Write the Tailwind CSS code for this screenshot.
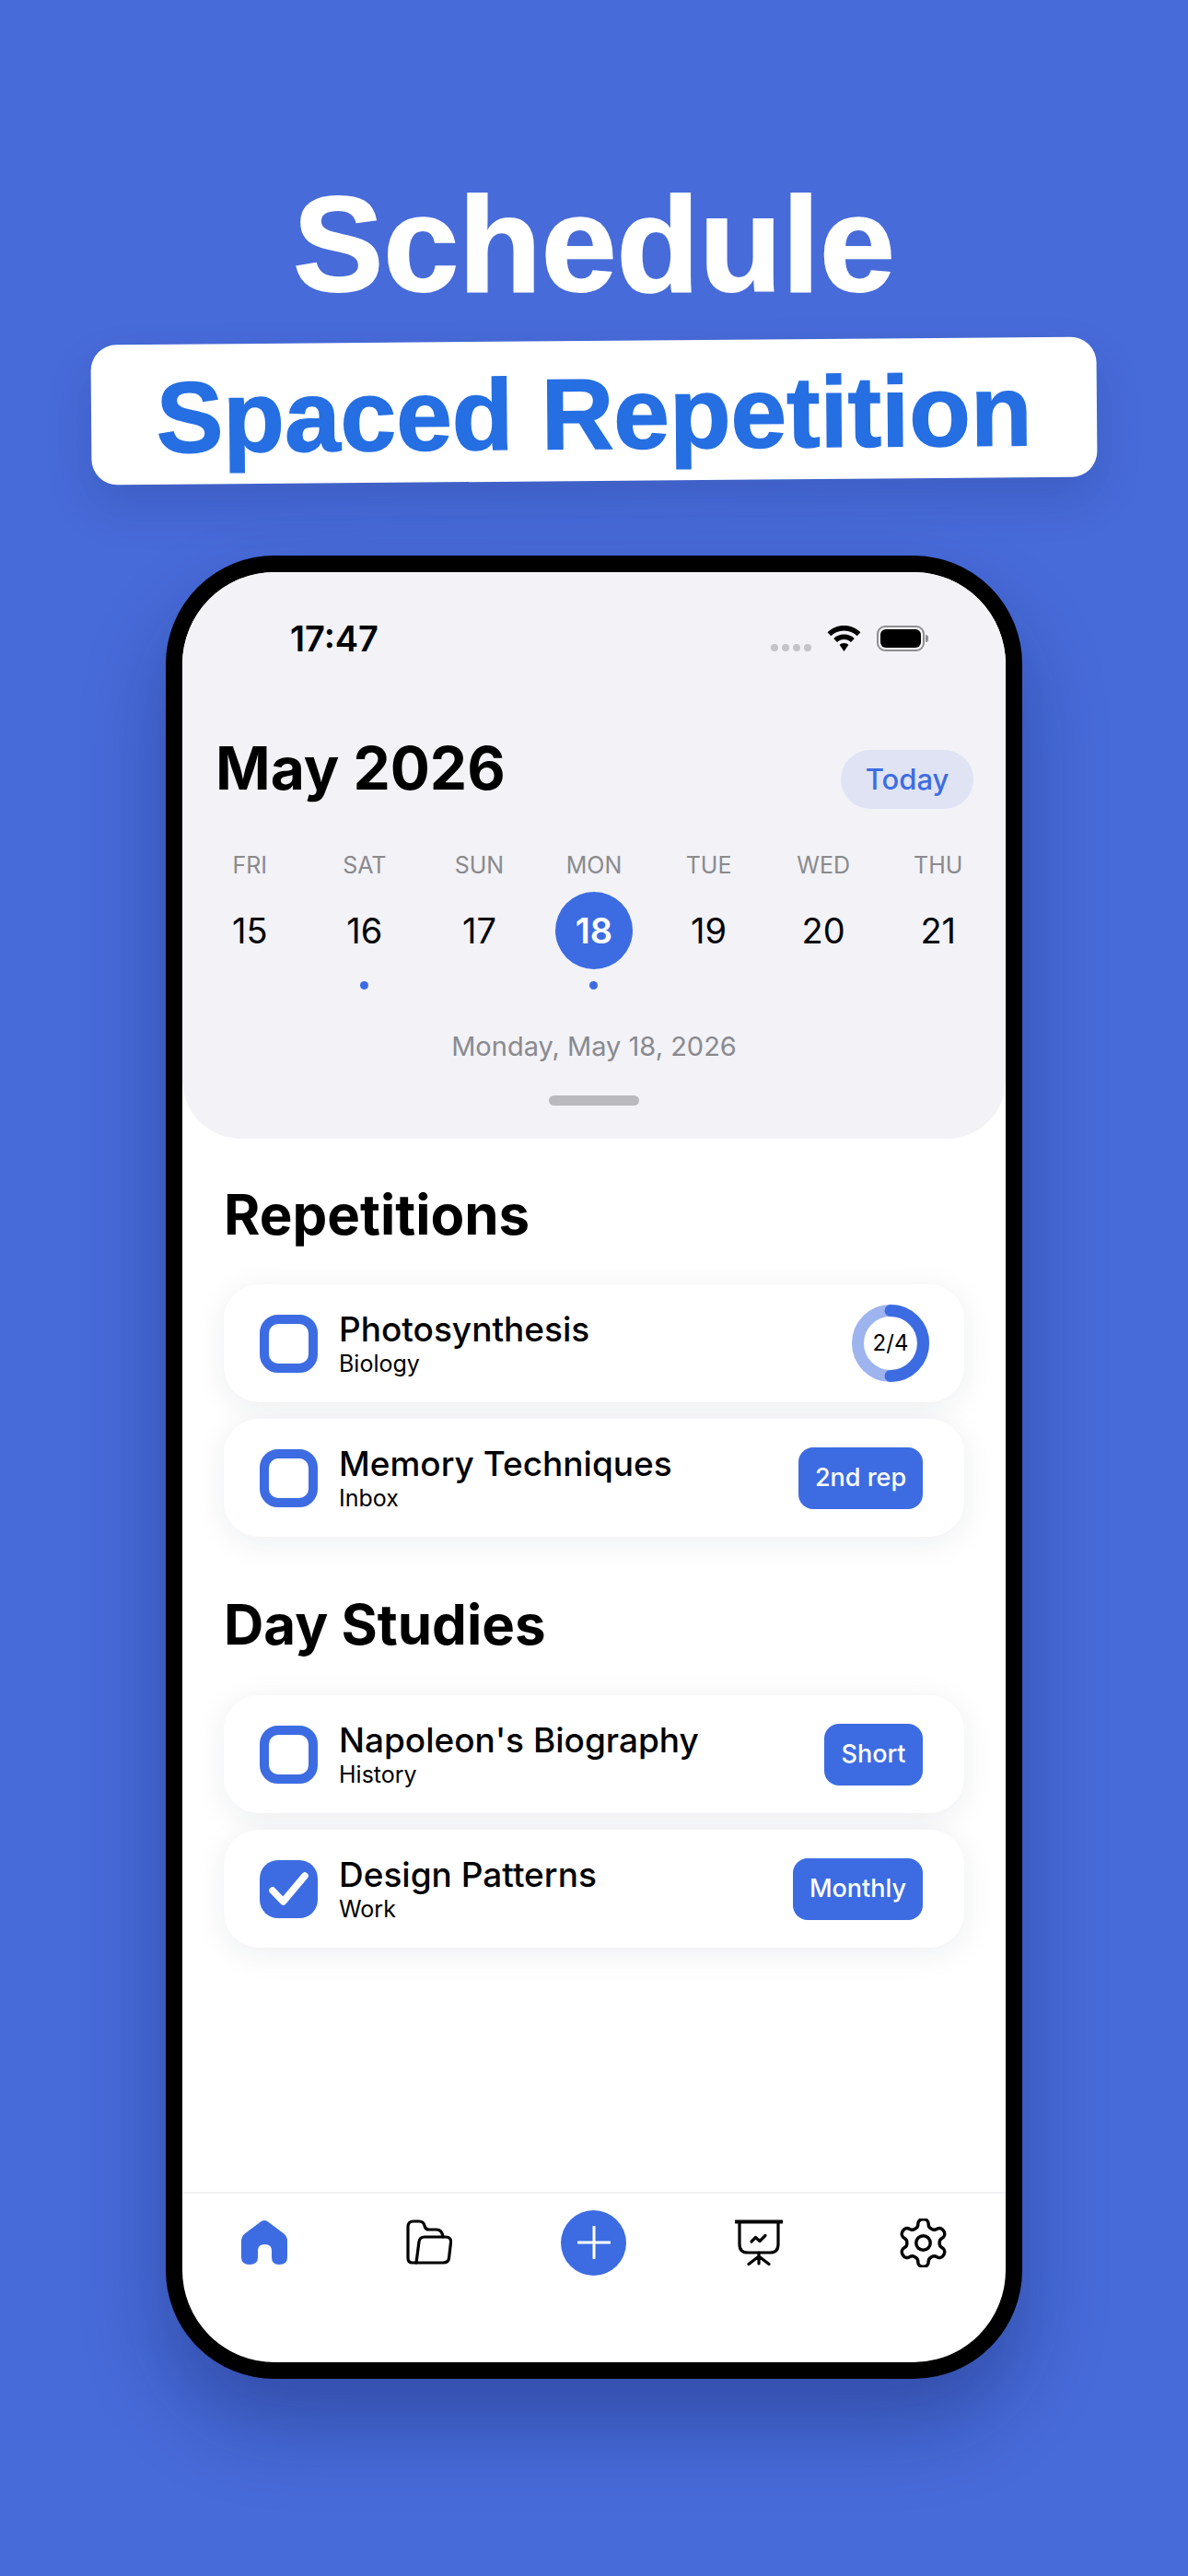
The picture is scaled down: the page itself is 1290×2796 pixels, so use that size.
<!DOCTYPE html>
<html lang="en">
<head>
    <meta charset="UTF-8">
    <meta name="viewport" content="width=device-width, initial-scale=1.0">
    <title>Schedule - Spaced Repetition</title>
    <script src="https://cdn.jsdelivr.net/npm/@tailwindcss/browser@4"></script>
</head>
<body class="bg-[#476bd9]">
<div class="w-[1290px] h-[2796px] overflow-hidden bg-[#476bd9] flex flex-col items-center font-['Inter',sans-serif]">
    <!-- Headline -->
    <h1 class="mt-[185px] h-[160px] leading-[160px] text-[147px] font-bold text-white font-['Liberation_Sans',sans-serif] [-webkit-text-stroke:2px_#fff]">Schedule</h1>
    <div class="mt-[25px] w-[1092px] h-[152px] -rotate-[0.47deg] rounded-[28px] bg-white flex items-center justify-center shadow-[0_24px_50px_rgba(20,30,90,0.16)]">
        <span class="mt-[7px] text-[109px] leading-none font-bold text-[#256fe3] font-['Liberation_Sans',sans-serif] [-webkit-text-stroke:1.5px_#256fe3]">Spaced Repetition</span>
    </div>

    <!-- Phone -->
    <div class="mt-[81px] w-[930px] h-[1979px] border-[18px] border-black rounded-[118px] bg-white overflow-hidden flex flex-col shadow-[0_50px_90px_rgba(10,20,70,0.32)] shrink-0">
        <!-- Calendar header -->
        <div class="h-[615px] shrink-0 bg-[#f2f2f7] rounded-b-[64px] flex flex-col">
            <div class="h-[66px] mt-[39px] pl-[117px] pr-[84px] flex items-center justify-between">
                <span class="text-[38px] leading-none font-semibold text-black">17:47</span>
                <div class="flex items-center">
                    <div class="flex gap-[4px] mr-[17px] mt-[19px]">
                        <span class="w-[8px] h-[8px] rounded-full bg-[#c4c4c8]"></span>
                        <span class="w-[8px] h-[8px] rounded-full bg-[#c4c4c8]"></span>
                        <span class="w-[8px] h-[8px] rounded-full bg-[#c4c4c8]"></span>
                        <span class="w-[8px] h-[8px] rounded-full bg-[#c4c4c8]"></span>
                    </div>
                    <svg class="w-[37px] h-[28px] mr-[17px]" viewBox="0 0 37 28" fill="none">
                        <path d="M18.5 0C11.5 0 5.300 2.700 0.500 7.300L4.300 11.300C8.100 7.700 13 5.500 18.500 5.500C24 5.500 28.900 7.700 32.700 11.300L36.500 7.300C31.700 2.700 25.500 0 18.500 0Z" fill="#000"/>
                        <path d="M18.500 9.500C14.100 9.500 10.200 11.200 7.200 14L11 18C13 16.200 15.600 15 18.500 15C21.400 15 24 16.200 26 18L29.800 14C26.800 11.200 22.900 9.500 18.500 9.500Z" fill="#000"/>
                        <path d="M18.500 19C16.600 19 14.900 19.700 13.700 20.900L18.500 28L23.300 20.900C22.100 19.700 20.400 19 18.500 19Z" fill="#000"/>
                    </svg>
                    <div class="w-[52px] h-[28px] rounded-[9px] border-[2.5px] border-[#8e8e93] p-[2px]">
                        <div class="w-full h-full rounded-[6px] bg-black"></div>
                    </div>
                    <div class="w-[3px] h-[8px] rounded-r-full bg-[#8e8e93] ml-[1px]"></div>
                </div>
            </div>

            <div class="mt-[67px] pl-[36px] pr-[35px] flex items-center justify-between h-[82px]">
                <h2 class="text-[64px] leading-none font-bold text-black">May 2026</h2>
                <span class="mt-[24px] w-[144px] h-[64px] rounded-full bg-[#dfe3f4] text-[#3d6ce2] text-[31px] font-medium flex items-center justify-center">Today</span>
            </div>

            <!-- Week strip -->
            <div class="mt-[47px] mx-[11px] grid grid-cols-7 text-center">
                <div class="flex flex-col items-center"><span class="h-[34px] leading-[34px] text-[25px] text-[#8a8a8e]">FRI</span><span class="mt-[12px] w-[84px] h-[84px] flex items-center justify-center text-[38px] text-black">15</span></div>
                <div class="flex flex-col items-center"><span class="h-[34px] leading-[34px] text-[25px] text-[#8a8a8e]">SAT</span><span class="mt-[12px] w-[84px] h-[84px] flex items-center justify-center text-[38px] text-black">16</span><span class="mt-[13px] w-[9px] h-[9px] rounded-full bg-[#3d6ce2]"></span></div>
                <div class="flex flex-col items-center"><span class="h-[34px] leading-[34px] text-[25px] text-[#8a8a8e]">SUN</span><span class="mt-[12px] w-[84px] h-[84px] flex items-center justify-center text-[38px] text-black">17</span></div>
                <div class="flex flex-col items-center"><span class="h-[34px] leading-[34px] text-[25px] text-[#8a8a8e]">MON</span><span class="mt-[12px] w-[84px] h-[84px] rounded-full bg-[#3d6ce2] flex items-center justify-center text-[38px] font-semibold text-white">18</span><span class="mt-[13px] w-[9px] h-[9px] rounded-full bg-[#3d6ce2]"></span></div>
                <div class="flex flex-col items-center"><span class="h-[34px] leading-[34px] text-[25px] text-[#8a8a8e]">TUE</span><span class="mt-[12px] w-[84px] h-[84px] flex items-center justify-center text-[38px] text-black">19</span></div>
                <div class="flex flex-col items-center"><span class="h-[34px] leading-[34px] text-[25px] text-[#8a8a8e]">WED</span><span class="mt-[12px] w-[84px] h-[84px] flex items-center justify-center text-[38px] text-black">20</span></div>
                <div class="flex flex-col items-center"><span class="h-[34px] leading-[34px] text-[25px] text-[#8a8a8e]">THU</span><span class="mt-[12px] w-[84px] h-[84px] flex items-center justify-center text-[38px] text-black">21</span></div>
            </div>

            <p class="mt-[42px] h-[40px] leading-[40px] text-center text-[29px] text-[#8a8a8e]">Monday, May 18, 2026</p>
            <div class="mt-[33px] mx-auto w-[98px] h-[11px] rounded-full bg-[#b9b9be]"></div>
        </div>

        <!-- Repetitions -->
        <div class="flex-1 px-[45px] flex flex-col">
            <h3 class="mt-[44px] h-[76px] leading-[76px] text-[60px] font-bold text-black">Repetitions</h3>
            <div class="mt-[38px] flex flex-col gap-[18px]">
                <div class="h-[128px] rounded-[38px] bg-white shadow-[0_6px_34px_rgba(30,40,70,0.08)] pl-[39px] pr-[38px] flex items-center">
                    <span class="w-[63px] h-[63px] rounded-[20px] border-[10px] border-[#3d6ce2] shrink-0"></span>
                    <div class="ml-[23px] flex-1">
                        <p class="text-[37px] leading-[44px] font-medium text-black">Photosynthesis</p>
                        <p class="text-[25px] leading-[30px] text-black">Biology</p>
                    </div>
                    <div class="relative w-[84px] h-[84px]">
                        <svg class="w-[84px] h-[84px] -rotate-90" viewBox="0 0 84 84" fill="none">
                            <circle cx="42" cy="42" r="35.500" stroke="#9db4ef" stroke-width="13"/>
                            <path d="M42 6.500A35.500 35.500 0 0 1 42 77.500" transform="rotate(90 42 42)" stroke="#3d6ce2" stroke-width="13" stroke-linecap="round"/>
                        </svg>
                        <span class="absolute inset-0 flex items-center justify-center text-[24px] text-black">2/4</span>
                    </div>
                </div>
                <div class="h-[128px] rounded-[38px] bg-white shadow-[0_6px_34px_rgba(30,40,70,0.08)] pl-[39px] pr-[45px] flex items-center">
                    <span class="w-[63px] h-[63px] rounded-[20px] border-[10px] border-[#3d6ce2] shrink-0"></span>
                    <div class="ml-[23px] flex-1">
                        <p class="text-[37px] leading-[44px] font-medium text-black">Memory Techniques</p>
                        <p class="text-[25px] leading-[30px] text-black">Inbox</p>
                    </div>
                    <span class="w-[135px] h-[67px] rounded-[16px] bg-[#3d6ce2] text-white text-[27px] font-medium flex items-center justify-center">2nd rep</span>
                </div>
            </div>

            <h3 class="mt-[57px] h-[76px] leading-[76px] text-[60px] font-bold text-black">Day Studies</h3>
            <div class="mt-[39px] flex flex-col gap-[18px]">
                <div class="h-[128px] rounded-[38px] bg-white shadow-[0_6px_34px_rgba(30,40,70,0.08)] pl-[39px] pr-[45px] flex items-center">
                    <span class="w-[63px] h-[63px] rounded-[20px] border-[10px] border-[#3d6ce2] shrink-0"></span>
                    <div class="ml-[23px] flex-1">
                        <p class="text-[37px] leading-[44px] font-medium text-black">Napoleon's Biography</p>
                        <p class="text-[25px] leading-[30px] text-black">History</p>
                    </div>
                    <span class="w-[107px] h-[67px] rounded-[16px] bg-[#3d6ce2] text-white text-[27px] font-medium flex items-center justify-center">Short</span>
                </div>
                <div class="h-[128px] rounded-[38px] bg-white shadow-[0_6px_34px_rgba(30,40,70,0.08)] pl-[39px] pr-[45px] flex items-center">
                    <span class="w-[63px] h-[63px] rounded-[20px] bg-[#3d6ce2] shrink-0 flex items-center justify-center">
                        <svg class="w-[48px] h-[48px]" viewBox="0 0 48 48" fill="none"><path d="M6 26L17.500 38L41 10" stroke="#fff" stroke-width="7.500" stroke-linecap="round" stroke-linejoin="round"/></svg>
                    </span>
                    <div class="ml-[23px] flex-1">
                        <p class="text-[37px] leading-[44px] font-medium text-black">Design Patterns</p>
                        <p class="text-[25px] leading-[30px] text-black">Work</p>
                    </div>
                    <span class="w-[141px] h-[67px] rounded-[16px] bg-[#3d6ce2] text-white text-[27px] font-medium flex items-center justify-center">Monthly</span>
                </div>
            </div>
        </div>

        <!-- Tab bar -->
        <div class="h-[185px] shrink-0 border-t-2 border-[#f2f2f4] grid grid-cols-5 justify-items-center">
            <div class="h-[106px] flex items-center justify-center">
                <svg class="w-[50px] h-[50px]" viewBox="0 0 50 50" fill="#3d6ce2"><path d="M25 1Q22 1 19 4L3 16Q0 19 0 24V41Q0 49 9 49Q18 49 18 41V34Q18 27 25.500 27Q33 27 33 34V41Q33 49 41 49Q50 49 50 41V24Q50 19 47 16L31 4Q28 1 25 1Z"/></svg>
            </div>
            <div class="h-[106px] flex items-center justify-center">
                <svg class="w-[50px] h-[50px]" viewBox="0 0 50 50" fill="none" stroke="#000" stroke-width="3.200" stroke-linecap="round" stroke-linejoin="round">
                    <path d="M11 47H7Q2 47 2 42V8Q2 2 8 2H14Q19 2 20 7Q21 11 25 11H33Q39 11 40 19"/>
                    <path d="M11 47L14 24Q15 19 20 19H43Q49 19 48.500 25L46.500 42Q46 47 40 47Z"/>
                </svg>
            </div>
            <div class="h-[106px] flex items-center justify-center">
                <span class="w-[71px] h-[71px] rounded-full bg-[#3d6ce2] flex items-center justify-center">
                    <svg class="w-[36px] h-[36px]" viewBox="0 0 36 36" fill="none" stroke="#fff" stroke-width="3" stroke-linecap="round"><path d="M18 1V35M1 18H35"/></svg>
                </span>
            </div>
            <div class="h-[106px] flex items-center justify-center">
                <svg class="w-[52px] h-[50px]" viewBox="0 0 52 50" fill="none" stroke="#000" stroke-width="3.200" stroke-linecap="round" stroke-linejoin="round">
                    <path d="M1 2.500H51" stroke-width="4"/>
                    <path d="M5 3V27Q5 36 14 36H38Q47 36 47 27V3"/>
                    <path d="M26 36V48M26 40L15 48.500M26 40L37 48.500"/>
                    <path d="M18 24L22.500 19.500L27 23.500L33 17.500"/>
                </svg>
            </div>
            <div class="h-[106px] flex items-center justify-center">
                <svg class="w-[53px] h-[53px]" viewBox="1.700 1.700 20.600 20.600" fill="none" stroke="#000" stroke-width="1.350" stroke-linecap="round" stroke-linejoin="round">
                    <path d="M12.220 2h-.44a2 2 0 0 0-2 2v.18a2 2 0 0 1-1 1.730l-.43.250a2 2 0 0 1-2 0l-.15-.080a2 2 0 0 0-2.730.730l-.22.380a2 2 0 0 0 .730 2.730l.15.100a2 2 0 0 1 1 1.720v.510a2 2 0 0 1-1 1.740l-.15.090a2 2 0 0 0-.730 2.730l.22.380a2 2 0 0 0 2.730.730l.15-.080a2 2 0 0 1 2 0l.43.250a2 2 0 0 1 1 1.730V20a2 2 0 0 0 2 2h.44a2 2 0 0 0 2-2v-.18a2 2 0 0 1 1-1.730l.43-.25a2 2 0 0 1 2 0l.15.080a2 2 0 0 0 2.730-.730l.22-.390a2 2 0 0 0-.730-2.730l-.15-.080a2 2 0 0 1-1-1.740v-.5a2 2 0 0 1 1-1.740l.15-.090a2 2 0 0 0 .730-2.730l-.22-.380a2 2 0 0 0-2.730-.730l-.15.080a2 2 0 0 1-2 0l-.43-.25a2 2 0 0 1-1-1.730V4a2 2 0 0 0-2-2z"/>
                    <circle cx="12" cy="12" r="3"/>
                </svg>
            </div>
        </div>
    </div>
</div>
</body>
</html>
